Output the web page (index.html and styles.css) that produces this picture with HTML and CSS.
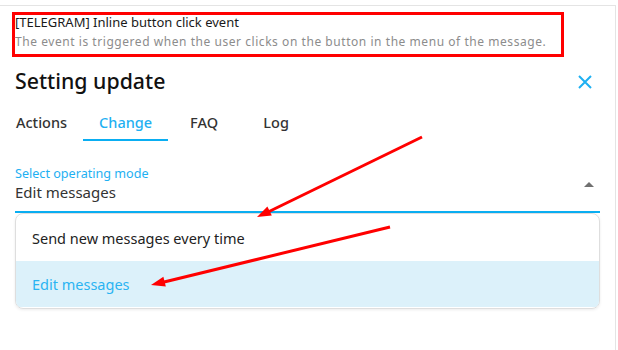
FILE: index.html
```html
<!DOCTYPE html>
<html lang="en">
<head>
    <meta charset="UTF-8">
    <title>Setting update</title>
    <link rel="stylesheet" href="styles.css">
</head>
<body>
    <div class="page">
        <div class="event">
            <div class="event-title">[TELEGRAM] Inline button click event</div>
            <div class="event-desc">The event is triggered when the user clicks on the button in the menu of the message.</div>
        </div>

        <div class="dialog">
            <div class="dialog-head">
                <h2>Setting update</h2>
                <svg class="close" width="14" height="14" viewBox="0 0 14 14">
                    <path d="M1 1 L13 13 M13 1 L1 13" stroke="#1eb0f2" stroke-width="2" fill="none"/>
                </svg>
            </div>

            <div class="tabs">
                <div class="tab">Actions</div>
                <div class="tab active">Change</div>
                <div class="tab">FAQ</div>
                <div class="tab">Log</div>
            </div>

            <div class="field">
                <div class="field-text">
                    <div class="field-label">Select operating mode</div>
                    <div class="field-value">Edit messages</div>
                </div>
                <div class="caret"></div>
            </div>

            <div class="menu">
                <div class="menu-item">Send new messages every time</div>
                <div class="menu-item selected">Edit messages</div>
            </div>
        </div>

        <!-- annotation arrows drawn over the screenshot -->
        <svg class="arrows" width="618" height="350" viewBox="0 0 618 350">
            <line x1="422" y1="137" x2="266" y2="213" stroke="#f00" stroke-width="3"/>
            <polygon points="257,217 267.4,206.4 271.8,215.4" fill="#f00"/>
            <line x1="390" y1="227" x2="160" y2="283" stroke="#f00" stroke-width="3"/>
            <polygon points="151,285 163.4,276.8 165.8,286.6" fill="#f00"/>
        </svg>
    </div>
</body>
</html>
```

FILE: styles.css
```css
body {
    margin: 0;
    font-family: "Noto Sans", sans-serif;
    background: #fff;
    color: #222;
}

.page {
    position: relative;
    margin-top: 5px;
    width: 615px;
    height: 344px;
    border-top: 1px solid #e4e4e4;
    border-right: 1px solid #e4e4e4;
}

.event {
    margin: 6px 0 0 12px;
    width: 546px;
    height: 39px;
    border: 3px solid #f00;
}

.event-title {
    font-size: 13px;
    line-height: 14px;
    color: #1a1a1a;
    white-space: nowrap;
}

.event-desc {
    margin-top: 6px;
    font-size: 12px;
    letter-spacing: 0.55px;
    line-height: 14px;
    color: #8c8c8c;
    white-space: nowrap;
}

.dialog {
    padding: 0 15px;
    width: 585px;
}

.dialog-head {
    display: flex;
    align-items: center;
    justify-content: space-between;
    margin-top: 12px;
    height: 24px;
}

h2 {
    margin: 0;
    font-size: 21.3px;
    font-weight: 500;
    line-height: 24px;
    color: #111;
}

.close {
    margin-right: 8px;
    margin-top: 2px;
}

.tabs {
    display: flex;
    margin: 7px -15px 0;
}

.tab {
    min-width: 72px;
    padding: 14px 16px 9px;
    box-sizing: border-box;
    text-align: center;
    font-size: 14.5px;
    font-weight: 500;
    line-height: 16px;
    color: #333;
    border-bottom: 2px solid transparent;
}

.tab.active {
    color: #1eb0f2;
    border-bottom-color: #0aaef2;
}

.field {
    display: flex;
    align-items: flex-start;
    justify-content: space-between;
    margin-top: 25px;
    padding-bottom: 9px;
    border-bottom: 2px solid #0aaef2;
}

.field-label {
    font-size: 12.6px;
    line-height: 16px;
    color: #1eb0f2;
}

.field-value {
    font-size: 15px;
    line-height: 20px;
    color: #333;
}

.caret {
    margin: 16px 6px 0 0;
    width: 0;
    height: 0;
    border-left: 5px solid transparent;
    border-right: 5px solid transparent;
    border-bottom: 5px solid #707070;
}

.menu {
    border: 1px solid #dedede;
    border-radius: 8px;
    padding-bottom: 1px;
    overflow: hidden;
    box-shadow: 0 1px 3px rgba(0, 0, 0, 0.08);
}

.menu-item {
    height: 47px;
    padding-left: 16px;
    display: flex;
    align-items: center;
    font-size: 14.5px;
    color: #222;
}

.menu-item.selected {
    height: 46px;
    background: #dcf1fa;
    color: #2ab4f2;
}

.arrows {
    position: absolute;
    left: 0;
    top: -6px;
}
```
